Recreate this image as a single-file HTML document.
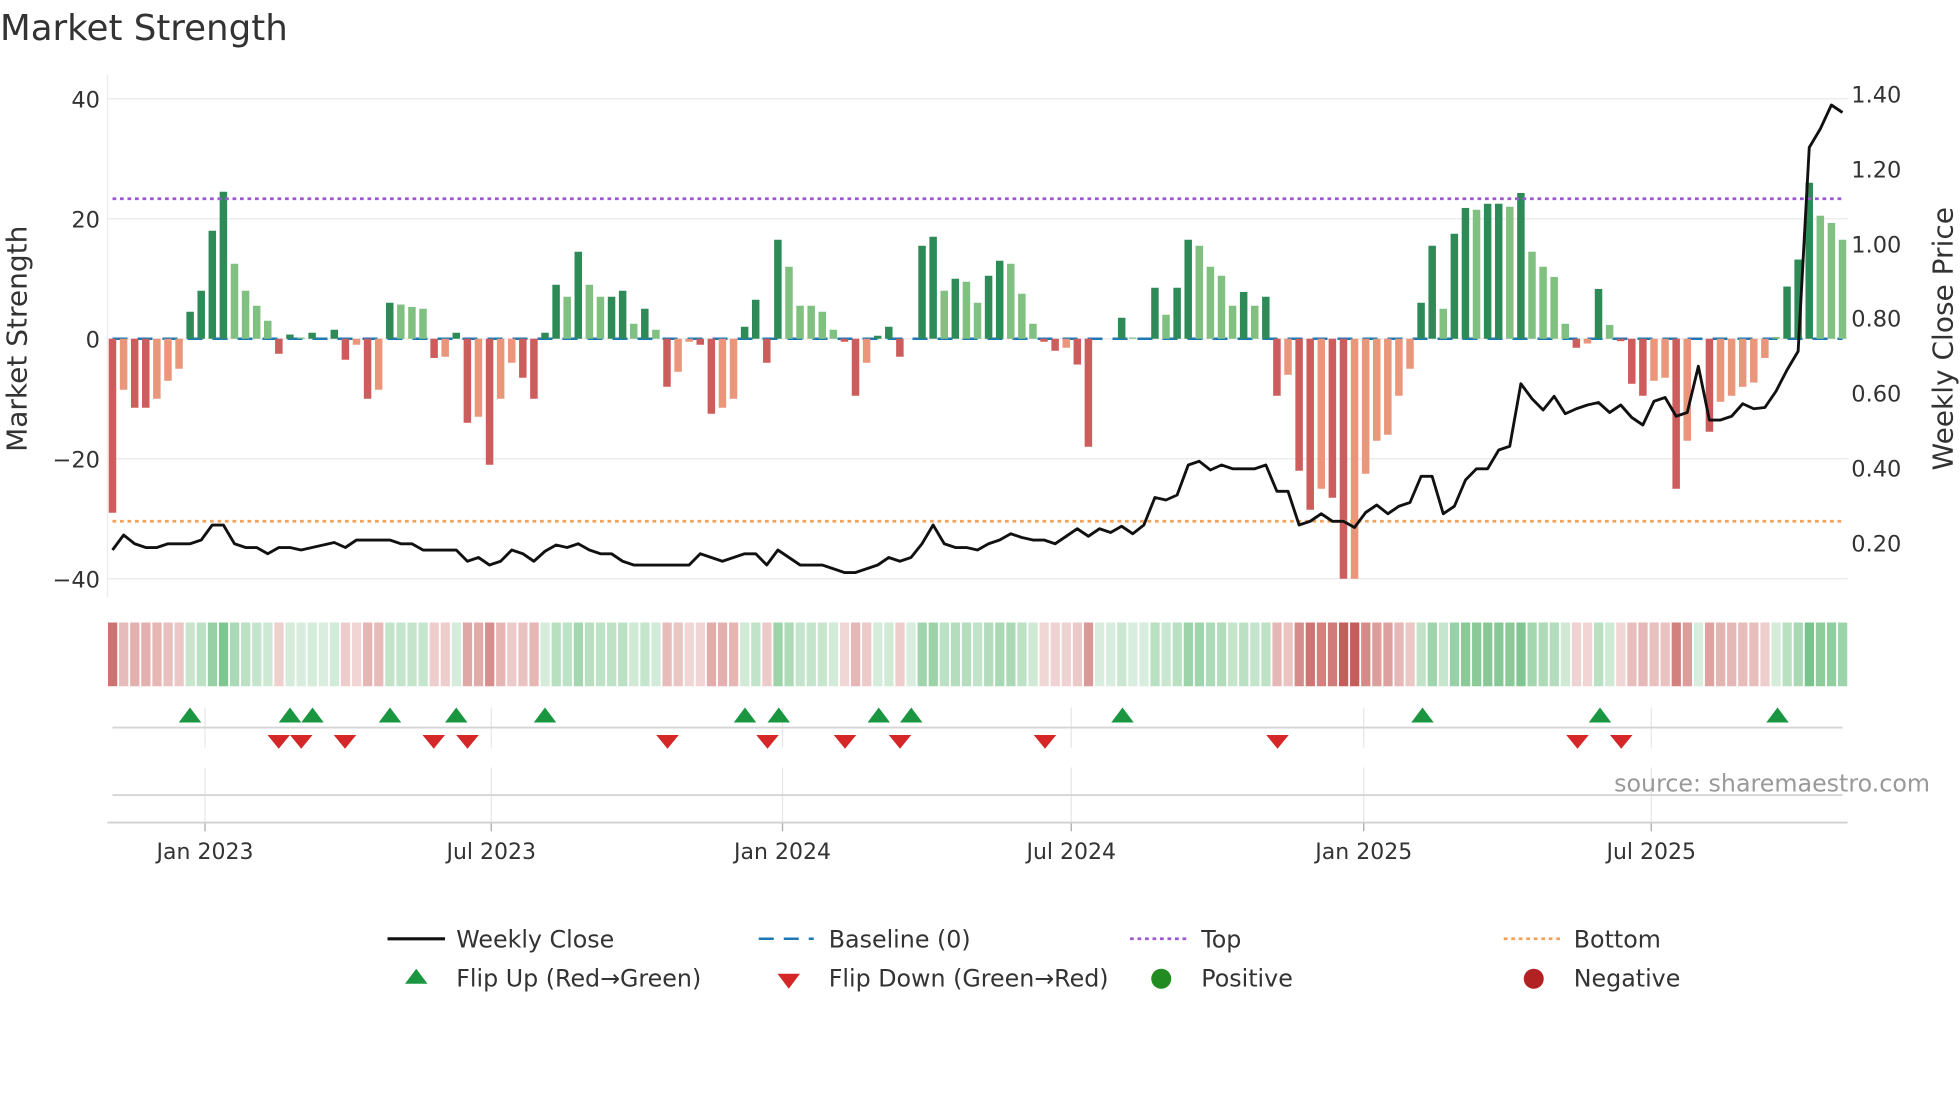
<!DOCTYPE html>
<html><head><meta charset="utf-8"><style>
html,body{margin:0;padding:0;background:#fff;}
svg{display:block;font-family:"DejaVu Sans","Liberation Sans",sans-serif;}
</style></head><body>
<svg id="s" width="1960" height="1102" viewBox="0 0 1568 881.6" xmlns="http://www.w3.org/2000/svg">
<rect width="1568" height="882" fill="#fff"/>
<text x="0" y="32" font-size="28.5" fill="#333">Market Strength</text>
<g id="grid"></g>
<g id="bars"></g>
<g id="over"></g>
<g font-size="18" fill="#333">
<text x="80" y="86" text-anchor="end">40</text>
<text x="80" y="182" text-anchor="end">20</text>
<text x="80" y="278" text-anchor="end">0</text>
<text x="80" y="374" text-anchor="end">−20</text>
<text x="80" y="470" text-anchor="end">−40</text>
<text x="1481" y="82">1.40</text>
<text x="1481" y="142">1.20</text>
<text x="1481" y="202">1.00</text>
<text x="1481" y="261">0.80</text>
<text x="1481" y="321">0.60</text>
<text x="1481" y="381">0.40</text>
<text x="1481" y="441">0.20</text>
</g>
<g font-size="17.6" fill="#333">
<text x="164" y="687" text-anchor="middle">Jan 2023</text>
<text x="393" y="687" text-anchor="middle">Jul 2023</text>
<text x="626" y="687" text-anchor="middle">Jan 2024</text>
<text x="857" y="687" text-anchor="middle">Jul 2024</text>
<text x="1091" y="687" text-anchor="middle">Jan 2025</text>
<text x="1321" y="687" text-anchor="middle">Jul 2025</text>
</g>
<text transform="translate(21,271) rotate(-90)" font-size="22.4" fill="#333" text-anchor="middle">Market Strength</text>
<text transform="translate(1562,271) rotate(-90)" font-size="22.4" fill="#333" text-anchor="middle">Weekly Close Price</text>
<text x="1544" y="633" font-size="19" fill="#999" text-anchor="end">source: sharemaestro.com</text>
<g font-size="19" fill="#333">
<line x1="310" y1="751" x2="356" y2="751" stroke="#111" stroke-width="2.5"/>
<text x="365" y="758">Weekly Close</text>
<line x1="607" y1="751" x2="651" y2="751" stroke="#1f77b4" stroke-width="2" stroke-dasharray="12,8"/>
<text x="663" y="758">Baseline (0)</text>
<line x1="904" y1="751" x2="950" y2="751" stroke="#9b59d0" stroke-width="2.2" stroke-dasharray="3,3"/>
<text x="961" y="758">Top</text>
<line x1="1203" y1="751" x2="1248" y2="751" stroke="#f4a259" stroke-width="2.2" stroke-dasharray="3,3"/>
<text x="1259" y="758">Bottom</text>
<polygon points="324,787 342,787 333,775" fill="#1a9641"/>
<text x="365" y="789">Flip Up (Red→Green)</text>
<polygon points="622,779 640,779 631,791" fill="#d62728"/>
<text x="663" y="789">Flip Down (Green→Red)</text>
<circle cx="929" cy="783" r="8" fill="#228b22"/>
<text x="961" y="789">Positive</text>
<circle cx="1227" cy="783" r="8" fill="#b22222"/>
<text x="1259" y="789">Negative</text>
</g>
</svg>
<script>
var NS="http://www.w3.org/2000/svg";
function el(p,t,a){var e=document.createElementNS(NS,t);for(var k in a)e.setAttribute(k,a[k]);p.appendChild(e);return e;}
var v=[[-29,1],[-8.5,0],[-11.5,1],[-11.5,1],[-10,0],[-7,0],[-5,0],[4.5,1],[8,1],[18,1],[24.5,1],[12.5,0],[8,0],[5.5,0],[3,0],[-2.5,1],[0.7,1],[0.2,0],[1,1],[0,0],[1.5,1],[-3.5,1],[-1,0],[-10,1],[-8.5,0],[6,1],[5.7,0],[5.3,0],[5,0],[-3.2,1],[-3,0],[1,1],[-14,1],[-13,0],[-21,1],[-10,0],[-4,0],[-6.5,1],[-10,1],[1,1],[9,1],[7,0],[14.5,1],[9,0],[7,0],[7,1],[8,1],[2.5,0],[5,1],[1.5,0],[-8,1],[-5.5,0],[-0.5,0],[-1,1],[-12.5,1],[-11.5,0],[-10,0],[2,1],[6.5,1],[-4,1],[16.5,1],[12,0],[5.5,0],[5.5,0],[4.5,0],[1.5,0],[-0.5,1],[-9.5,1],[-4,0],[0.5,1],[2,1],[-3,1],[0,0],[15.5,1],[17,1],[8,0],[10,1],[9.5,0],[6,0],[10.5,1],[13,1],[12.5,0],[7.5,0],[2.5,0],[-0.5,1],[-2,1],[-1.5,0],[-4.3,1],[-18,1],[0,0],[0,0],[3.5,1],[0.2,0],[0,0],[8.5,1],[4,0],[8.5,1],[16.5,1],[15.5,0],[12,0],[10.5,0],[5.5,0],[7.8,1],[5.5,0],[7,1],[-9.5,1],[-6,0],[-22,1],[-28.5,1],[-25,0],[-26.5,1],[-40,1],[-40,0],[-22.5,0],[-17,0],[-16,0],[-9.5,0],[-5,0],[6,1],[15.5,1],[5,0],[17.5,1],[21.8,1],[21.5,0],[22.5,1],[22.5,1],[22,0],[24.3,1],[14.5,0],[12,0],[10.3,0],[2.5,0],[-1.5,1],[-0.8,0],[8.3,1],[2.3,0],[-0.4,1],[-7.5,1],[-9.5,1],[-7,0],[-6.5,0],[-25,1],[-17,0],[0,0],[-15.5,1],[-10.5,0],[-9.5,0],[-8,0],[-7.3,0],[-3.2,0],[0.3,0],[8.7,1],[13.2,1],[26,1],[20.5,0],[19.3,0],[16.5,0]];
var py=[440,428,435,438,438,435,435,435,432,420,420,435,438,438,443,438,438,440,438,436,434,438,432,432,432,432,435,435,440,440,440,440,449,446,452,449,440,443,449,441,436,438,435,440,443,443,449,452,452,452,452,452,452,443,446,449,446,443,443,452,440,446,452,452,452,455,458,458,455,452,446,449,446,435,420,435,438,438,440,435,432,427,430,432,432,435,429,423,429,423,426,421,427,420,398,400,396,372,369,376,372,375,375,375,372,393,393,420,417,411,417,417,422,410,404,411,405,402,381,381,411,405,384,375,375,360,357,307,319,328,317,331,327,324,322,330,324,334,340,321,318,333,330,293,336,336,333,323,327,326,313,296,281,118,103,84,90];
var g=document.getElementById('grid'),b=document.getElementById('bars'),o=document.getElementById('over');
[79,175,271,367,463].forEach(function(y){el(g,'line',{x1:86,x2:1478,y1:y,y2:y,stroke:'#ececef','stroke-width':1.2});});
el(g,'line',{x1:86,x2:86,y1:60,y2:478,stroke:'#ececef','stroke-width':1});
[164,393,626,857,1091,1321].forEach(function(x){
 el(g,'line',{x1:x,x2:x,y1:566,y2:598,stroke:'#e6e6ea','stroke-width':1});
 el(g,'line',{x1:x,x2:x,y1:614,y2:665,stroke:'#e6e6ea','stroke-width':1});
 el(g,'line',{x1:x,x2:x,y1:658,y2:665,stroke:'#aaa','stroke-width':1});
});
el(g,'line',{x1:90,x2:1474,y1:582,y2:582,stroke:'#d5d5d8','stroke-width':1.5});
el(g,'line',{x1:90,x2:1474,y1:636,y2:636,stroke:'#d5d5d8','stroke-width':1.5});
el(g,'line',{x1:86,x2:1478,y1:658,y2:658,stroke:'#d0d0d3','stroke-width':1.5});
el(b,'line',{x1:90,x2:1474,y1:271,y2:271,stroke:'#1f77b4','stroke-width':2,'stroke-dasharray':'12,8'});
var step=(1474-90)/156;
v.forEach(function(d,i){
 var x=90+i*step,val=d[0],y=271-4.8*val;
 var c=val>=0?(d[1]?'#2e8b57':'#80c080'):(d[1]?'#cd5c5c':'#e9967a');
 if(Math.abs(val)>0.05) el(b,'rect',{x:x-3,y:Math.min(y,271),width:6,height:Math.abs(271-y),fill:c});
 var a=0.22+0.7*Math.min(Math.abs(val)/35,1);
 el(b,'rect',{x:x-3.6,y:498,width:7.4,height:51,fill:val>=0?'#4cae62':'#c0504d','fill-opacity':a.toFixed(2)});
});
el(o,'line',{x1:90,x2:1474,y1:159,y2:159,stroke:'#9b59d0','stroke-width':2.2,'stroke-dasharray':'3,3'});
el(o,'line',{x1:90,x2:1474,y1:417,y2:417,stroke:'#f4a259','stroke-width':2.2,'stroke-dasharray':'3,3'});
var pts=py.map(function(y,i){return (90+i*step).toFixed(1)+','+y;}).join(' ');
el(o,'polyline',{points:pts,fill:'none',stroke:'#111','stroke-width':2.3,'stroke-linejoin':'round'});
[152,232,250,312,365,436,596,623,703,729,898,1138,1280,1422].forEach(function(x){el(o,'polygon',{points:(x-9)+',578 '+(x+9)+',578 '+x+',566',fill:'#1a9641'});});
[223,241,276,347,374,534,614,676,720,836,1022,1262,1297].forEach(function(x){el(o,'polygon',{points:(x-9)+',588 '+(x+9)+',588 '+x+',599',fill:'#d62728'});});
</script>
</body></html>
